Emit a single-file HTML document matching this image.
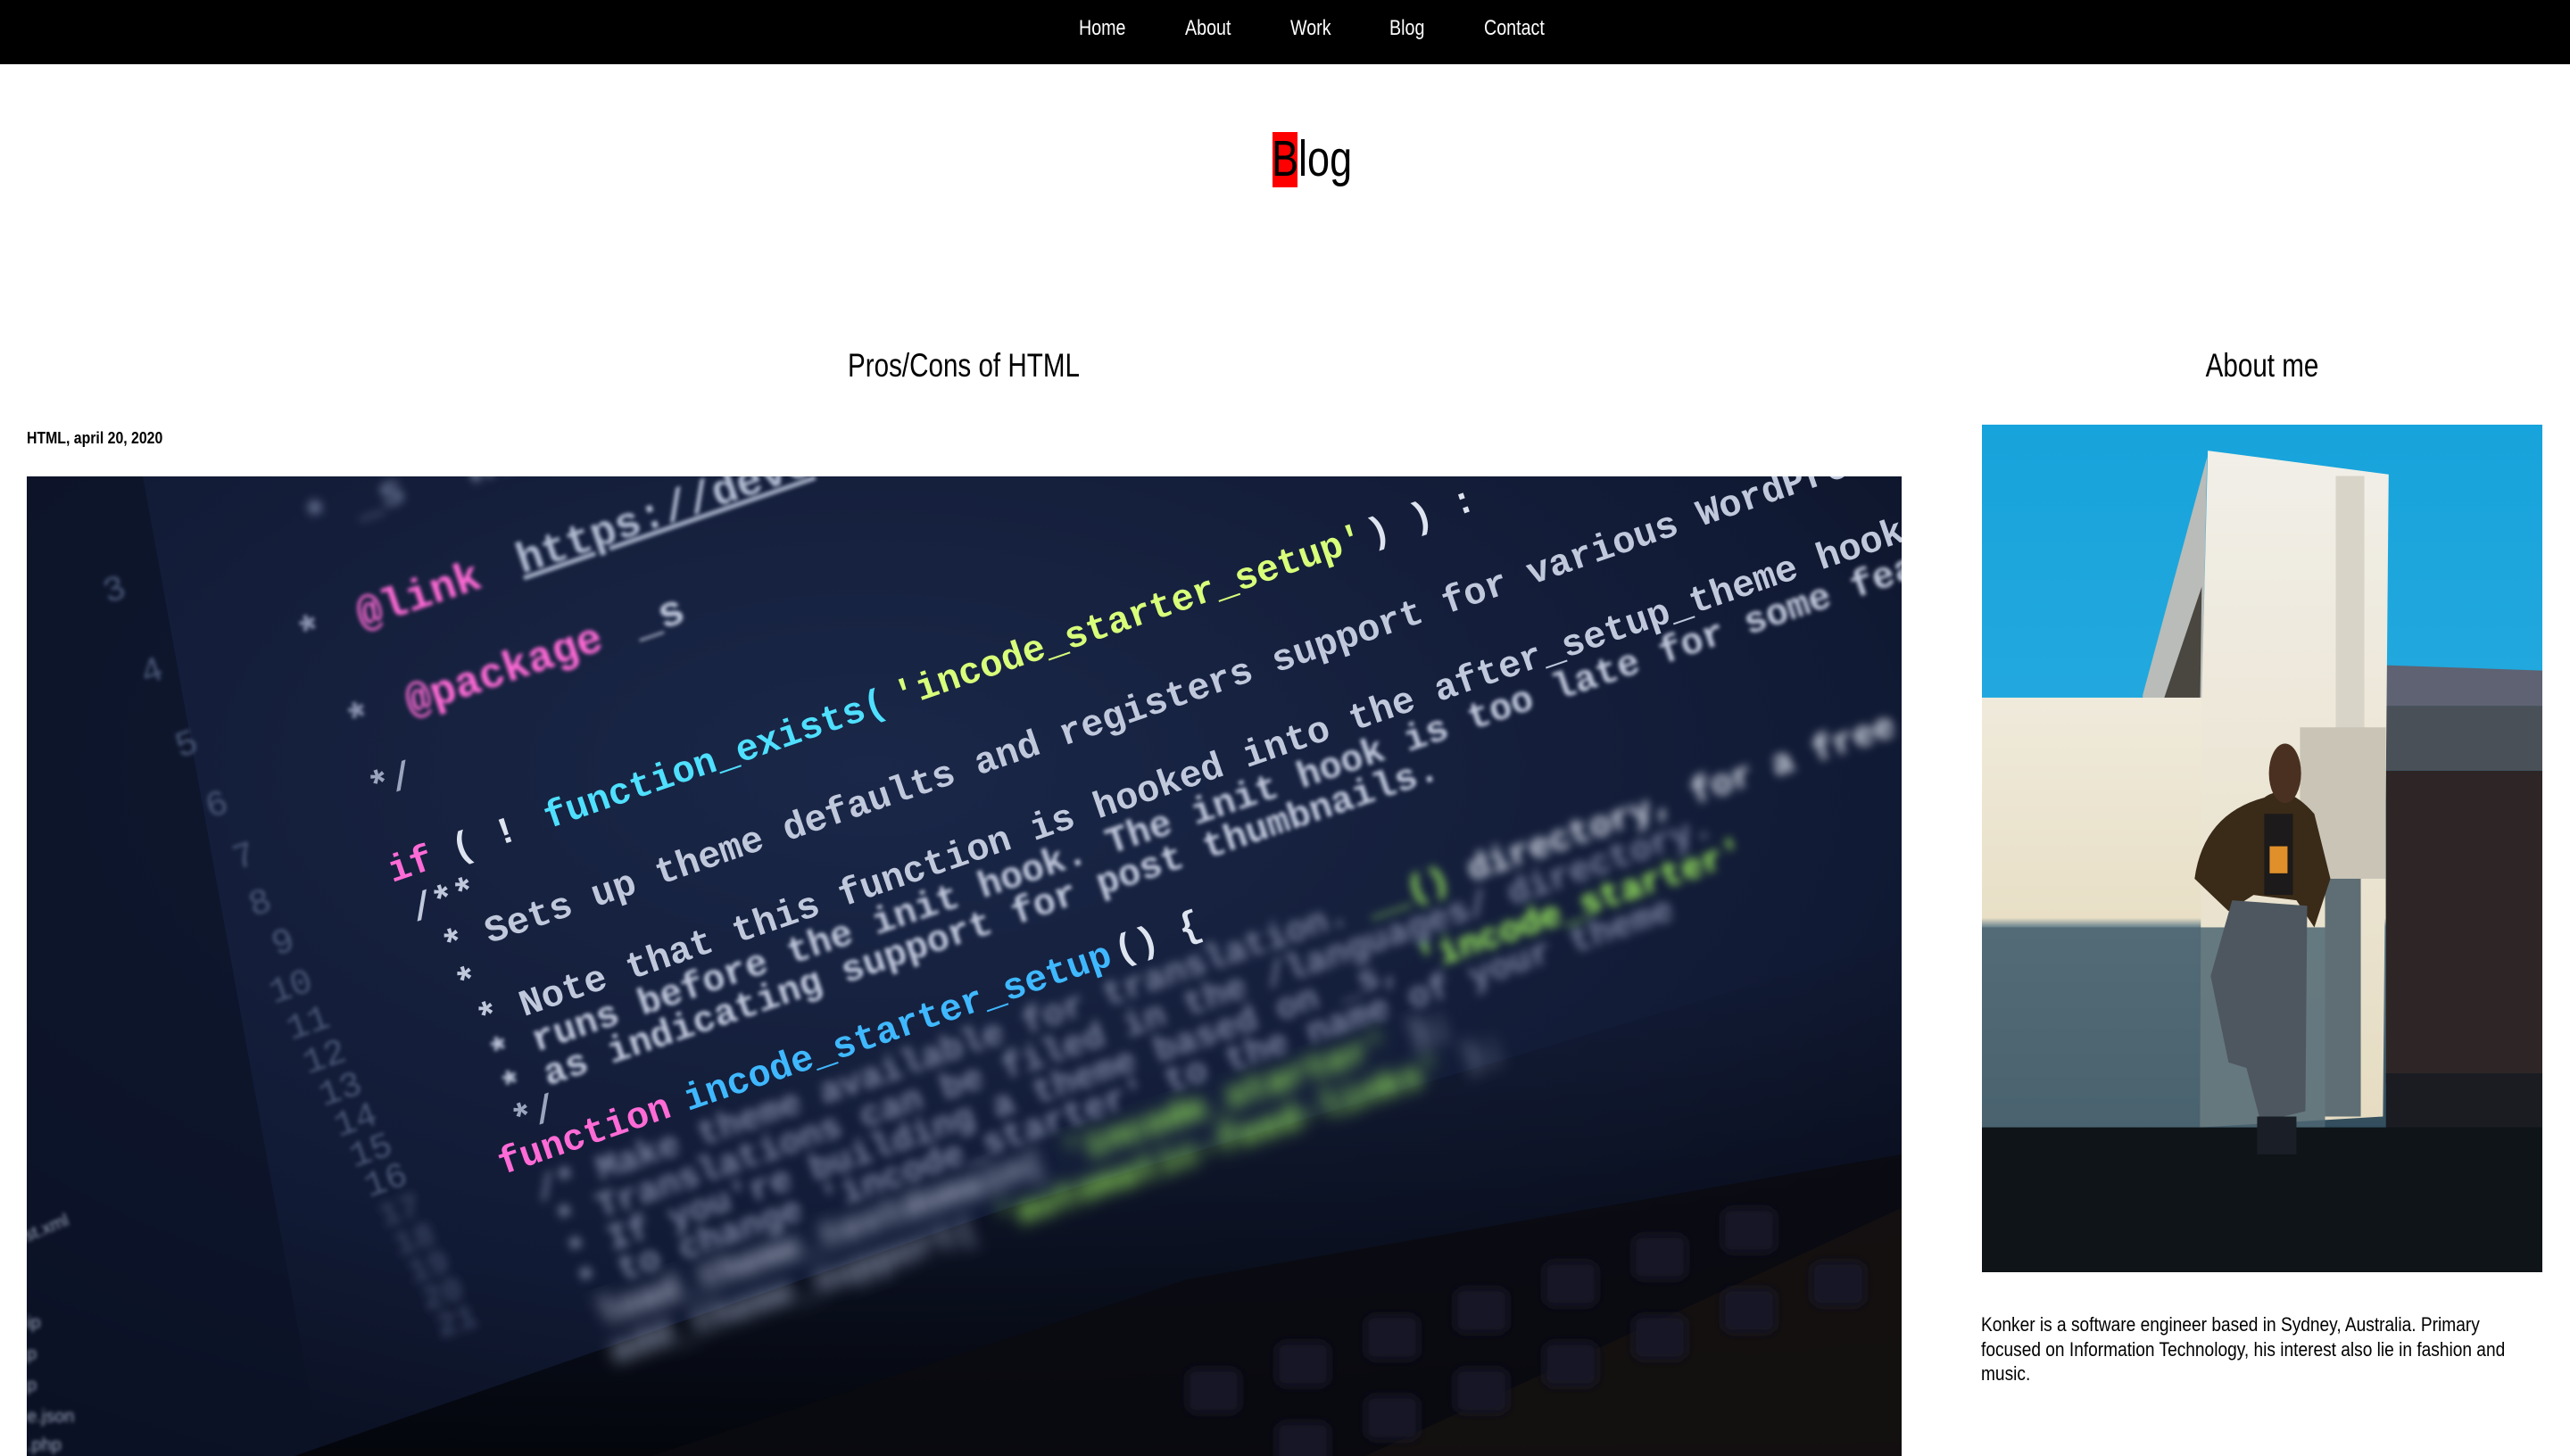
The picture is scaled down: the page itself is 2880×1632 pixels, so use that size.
<!DOCTYPE html>
<html><head><meta charset="utf-8">
<style>
html,body{margin:0;padding:0;background:#fff;width:2880px;height:1632px;overflow:hidden;position:relative;font-family:"Liberation Sans",sans-serif;}
.nav{position:absolute;left:0;top:0;width:2880px;height:72px;background:#000;}
.nav span{position:absolute;top:18px;color:#fff;font-size:24px;line-height:28px;transform:scaleX(0.82);transform-origin:left;white-space:nowrap;}
.abs{position:absolute;white-space:nowrap;}
</style></head><body>
<div class="nav">
<span style="left:1209px">Home</span>
<span style="left:1328px">About</span>
<span style="left:1446px">Work</span>
<span style="left:1557px">Blog</span>
<span style="left:1663px">Contact</span>
</div>
<div class="abs" style="left:1426px;top:148px;width:28px;height:62px;background:#ff0000"></div>
<div class="abs" style="left:1425px;top:145px;font-size:57px;line-height:66px;color:#000;transform:scaleX(0.79);transform-origin:left">Blog</div>
<div class="abs" style="left:780px;width:600px;text-align:center;top:388px;font-size:37px;line-height:44px;transform:scaleX(0.8);transform-origin:center">Pros/Cons of HTML</div>
<div class="abs" style="left:2235px;width:600px;text-align:center;top:388px;font-size:37px;line-height:44px;transform:scaleX(0.8);transform-origin:center">About me</div>
<div class="abs" style="left:30px;top:480px;font-size:18px;font-weight:bold;line-height:22px;transform:scaleX(0.88);transform-origin:left">HTML, april 20, 2020</div>

<svg class="abs" style="left:30px;top:534px" width="2101" height="1098" viewBox="0 0 2101 1098">
<defs>
<radialGradient id="cg" cx="0.45" cy="0.3" r="0.9"><stop offset="0" stop-color="#1a2748"/><stop offset="0.6" stop-color="#111a34"/><stop offset="1" stop-color="#070b18"/></radialGradient>
<filter id="b1"><feGaussianBlur stdDeviation="2"/></filter>
<filter id="b2"><feGaussianBlur stdDeviation="5"/></filter>
<filter id="b3"><feGaussianBlur stdDeviation="9"/></filter>
<linearGradient id="kb" x1="0" y1="0" x2="0" y2="1"><stop offset="0" stop-color="#0a0f1c" stop-opacity="0"/><stop offset="1" stop-color="#04060c"/></linearGradient>
</defs>
<rect width="2101" height="1098" fill="url(#cg)"/>
<polygon points="0,0 130,0 330,1098 0,1098" fill="#0c1326" opacity="0.7"/>
<polygon points="300,1098 1100,820 2101,520 2101,1098" fill="url(#kb)"/>
<polygon points="700,1098 1300,900 2101,760 2101,1098" fill="#0b0a10" opacity="0.85"/>
<polygon points="1500,1098 2101,820 2101,1098" fill="#1a1410" opacity="0.6"/>
<g filter="url(#b2)" fill="#121827">
<rect x="1300" y="1000" width="60" height="50" rx="10"/><rect x="1400" y="970" width="60" height="50" rx="10"/><rect x="1500" y="940" width="60" height="50" rx="10"/><rect x="1600" y="910" width="60" height="50" rx="10"/><rect x="1700" y="880" width="60" height="50" rx="10"/><rect x="1800" y="850" width="60" height="50" rx="10"/><rect x="1900" y="820" width="60" height="50" rx="10"/>
<rect x="1400" y="1060" width="60" height="50" rx="10"/><rect x="1500" y="1030" width="60" height="50" rx="10"/><rect x="1600" y="1000" width="60" height="50" rx="10"/><rect x="1700" y="970" width="60" height="50" rx="10"/><rect x="1800" y="940" width="60" height="50" rx="10"/><rect x="1900" y="910" width="60" height="50" rx="10"/><rect x="2000" y="880" width="60" height="50" rx="10"/>
</g>
<g transform="translate(410,455) rotate(-19)" font-family="'Liberation Mono',monospace" font-weight="bold">
<g filter="url(#b2)" font-size="48"><text x="40" y="-400" fill="#6a7696">* _s</text><text x="230" y="-395" fill="#9aa4c0">https://devel</text></g>
<g filter="url(#b1)" font-size="48">
<text x="-10" y="-280" fill="#8a94b0">*</text><text x="60" y="-280" fill="#ff6bd6">@link</text><text x="250" y="-280" fill="#b0bad0" text-decoration="underline">https://deve</text>
<text x="10" y="-170" fill="#8a94b0">*</text><text x="80" y="-170" fill="#ff6bd6">@package</text><text x="350" y="-170" fill="#c0c8dc">_s</text>
</g>
<g font-size="42">
<text x="10" y="-95" fill="#9aa4bc">*/</text>
<text x="0" y="0" fill="#ff6bd6">if</text><text x="75" y="0" fill="#dde4f0">( !</text><text x="185" y="0" fill="#4fe0ff">function_exists(</text><text x="600" y="0" fill="#d8ff7a">'incode_starter_setup'</text><text x="1160" y="0" fill="#dde4f0">) ) :</text>
<text x="10" y="50" fill="#c0c8dc">/**</text>
<text x="30" y="100" fill="#c0c8dc">* Sets up theme defaults and registers support for various WordPress features.</text>
<text x="30" y="145" fill="#c0c8dc">*</text>
<text x="40" y="190" fill="#c0c8dc">* Note that this function is hooked into the after_setup_theme hook, which</text>
<text x="40" y="232" fill="#c0c8dc" filter="url(#b1)">* runs before the init hook. The init hook is too late for some features, such</text>
<text x="40" y="272" fill="#c0c8dc" filter="url(#b1)">* as indicating support for post thumbnails.</text>
<text x="40" y="310" fill="#9aa4bc">*/</text>
<text x="10" y="350" fill="#ff6bd6">function</text><text x="230" y="350" fill="#3fb8ff">incode_starter_setup</text><text x="740" y="350" fill="#dde4f0">() {</text>
</g>
<g filter="url(#b2)" font-size="40">
<text x="40" y="392" fill="#7a84a0">/* Make theme available for translation. <tspan fill="#a8ff60">__()</tspan> <tspan fill="#dde4f0">directory, for a free and nested</tspan></text>
<text x="50" y="432" fill="#7a84a0">* Translations can be filed in the /languages/ directory.</text>
<text x="50" y="470" fill="#7a84a0">* If you're building a theme based on _s, <tspan fill="#a8ff60">'incode_starter'</tspan></text>
<text x="50" y="506" fill="#7a84a0">* to change 'incode_starter' to the name of your theme</text>
</g>
<g filter="url(#b3)" font-size="40">
<text x="60" y="545" fill="#c0c8dc">load_theme_textdomain( <tspan fill="#a8ff60">'incode_starter'</tspan> );</text>
<text x="60" y="590" fill="#9aa4bc">add_theme_support( <tspan fill="#a8ff60">'automatic-feed-links'</tspan> );</text>
</g>
<g fill="#4a5676" font-size="40" filter="url(#b1)" font-weight="normal">
<text x="-200" y="-400">3</text><text x="-190" y="-300">4</text><text x="-180" y="-210">5</text><text x="-170" y="-135">6</text><text x="-160" y="-70">7</text><text x="-160" y="-15">8</text><text x="-150" y="35">9</text><text x="-170" y="85">10</text><text x="-165" y="130">11</text><text x="-160" y="172">12</text><text x="-155" y="212">13</text><text x="-150" y="250">14</text><text x="-145" y="288">15</text><text x="-140" y="325">16</text>
</g>
<g fill="#3a4462" font-size="38" filter="url(#b2)">
<text x="-135" y="362">17</text><text x="-130" y="398">18</text><text x="-125" y="432">19</text><text x="-120" y="466">20</text><text x="-115" y="500">21</text>
</g>
</g>
<g fill="#9aa4bc" font-family="'Liberation Sans',sans-serif" font-size="20" filter="url(#b1)">
<text x="0" y="858" transform="rotate(-22 0 858)">st.xml</text>
<text x="0" y="955">ip</text><text x="0" y="990">p</text><text x="0" y="1025">p</text><text x="0" y="1060">e.json</text><text x="0" y="1092">.php</text>
</g>
</svg>

<svg class="abs" style="left:2221px;top:476px" width="628" height="950" viewBox="0 0 1568 1568" preserveAspectRatio="none">
<defs>
<linearGradient id="sky" x1="0" y1="0" x2="0" y2="1"><stop offset="0" stop-color="#17a3db"/><stop offset="1" stop-color="#3ab4e4"/></linearGradient>
<linearGradient id="wall" x1="0" y1="0" x2="0" y2="1"><stop offset="0" stop-color="#efeadb"/><stop offset="0.5" stop-color="#e8dfc6"/><stop offset="0.52" stop-color="#6f8790"/><stop offset="1" stop-color="#2f4a5a"/></linearGradient>
<linearGradient id="tw" x1="0" y1="0" x2="0" y2="1"><stop offset="0" stop-color="#f1efe8"/><stop offset="1" stop-color="#e6dcc2"/></linearGradient>
</defs>
<rect width="1568" height="1568" fill="url(#sky)"/>
<polygon points="1130,445 1568,455 1568,520 1130,520" fill="#5e6272"/>
<rect x="1130" y="520" width="438" height="120" fill="#4a5058"/>
<rect x="1130" y="640" width="438" height="580" fill="#2e2626"/>
<rect x="1130" y="1200" width="438" height="368" fill="#1a1c22"/>
<polygon points="450,500 630,60 615,530 450,525" fill="#b9bcb8"/>
<polygon points="500,525 615,300 610,530" fill="#4a4640"/>
<rect x="0" y="505" width="1130" height="815" fill="url(#wall)"/>
<polygon points="632,48 1138,92 1122,1280 610,1300 615,505" fill="url(#tw)"/>
<rect x="990" y="95" width="80" height="470" fill="#d8d4c8"/>
<rect x="890" y="560" width="240" height="280" fill="#c9c4b6"/>
<rect x="960" y="840" width="100" height="440" fill="#5f6e74"/>
<rect x="0" y="930" width="960" height="390" fill="#4d6672" opacity="0.85"/>
<rect x="0" y="1300" width="1568" height="268" fill="#0e1418"/>
<path d="M790,690 Q850,660 930,720 L975,840 L930,930 L880,880 L760,870 L690,900 L595,840 Q620,720 790,690Z" fill="#3a2a18"/>
<rect x="790" y="720" width="80" height="150" fill="#1c1a1a"/>
<rect x="805" y="780" width="50" height="50" fill="#e0902a"/>
<ellipse cx="848" cy="645" rx="45" ry="55" fill="#4a3020"/>
<path d="M700,880 L910,890 L905,1270 L780,1290 L740,1190 L690,1180 L640,1020 Z" fill="#4e5760"/>
<rect x="770" y="1280" width="110" height="70" fill="#1a1e26"/>
</svg>

<div class="abs" style="left:2220px;top:1471px;width:740px;white-space:normal;font-size:22.5px;line-height:27.5px;color:#000;transform:scaleX(0.85);transform-origin:left">Konker is a software engineer based in Sydney, Australia. Primary focused on Information Technology, his interest also lie in fashion and music.</div>
</body></html>
